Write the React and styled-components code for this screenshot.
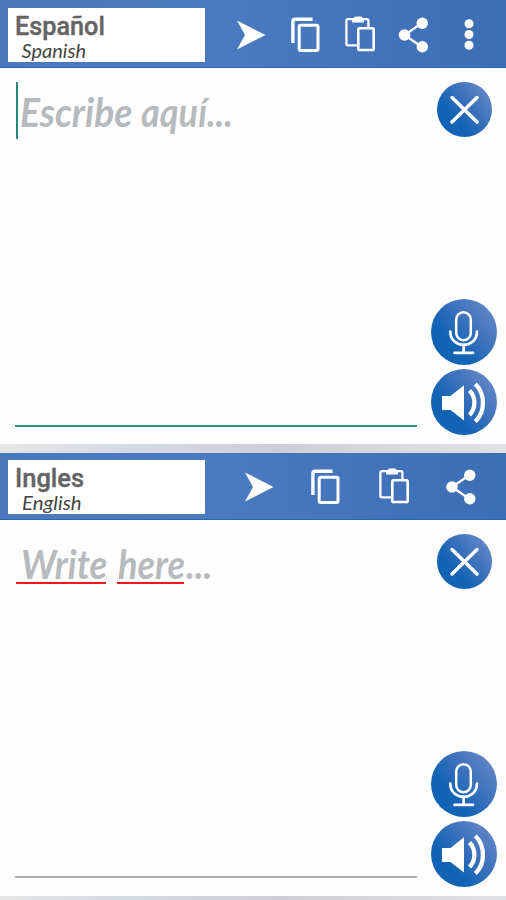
import styled, { createGlobalStyle, css } from 'styled-components'

const GlobalStyle = createGlobalStyle`
  * {
    box-sizing: border-box;
  }
  body {
    margin: 0;
    background: #fefefe;
    font-family: Roboto, "Liberation Sans", sans-serif;
  }
`;

const Screen = styled.div`
  width: 506px;
  height: 900px;
  display: flex;
  flex-direction: column;
  overflow: hidden;
`;

const Panel = styled.section`
  flex: none;
`;

const Header = styled.header`
  height: ${(props) => props.$height}px;
  display: flex;
  align-items: flex-start;
  padding: ${(props) => props.$height - 60.5}px 0 0 7.5px;
  background: linear-gradient(90deg, #4b78bd 0%, #4a7abf 45%, #3c6eb6 100%);
  border-bottom: 1px solid #2d68b2;
`;

const Language = styled.div`
  width: 197px;
  height: 54px;
  padding: 6px 0 0 7px;
  background: #fff;
  overflow: hidden;
`;

const LanguageName = styled.div`
  font-size: 25px;
  line-height: 26px;
  font-weight: 500;
  color: #646464;
  white-space: nowrap;
  -webkit-text-stroke: 0.4px #646464;
  transform: scaleX(${(props) => props.$scale});
  transform-origin: left;
`;

const LanguageAlias = styled.div`
  width: max-content;
  margin-left: 7px;
  font-family: Lato, "Liberation Sans", sans-serif;
  font-size: 20px;
  line-height: 20px;
  font-style: italic;
  color: #454545;
  transform: scaleX(${(props) => props.$scale});
  transform-origin: left;
`;

const Actions = styled.nav`
  display: flex;
  justify-content: space-between;
  width: ${(props) => (props.$menu ? 248 : 232)}px;
  margin: 9.5px 0 0 ${(props) => (props.$menu ? 31.5 : 39.5)}px;
`;

const Icon = styled.svg`
  display: block;
  width: 30px;
  height: 36px;
  overflow: visible;
  fill: none;
  stroke: #fff;
`;

const Body = styled.div`
  height: 376px;
  display: flex;
  justify-content: space-between;
  padding: 13.5px 9px 9px 15px;
`;

const Field = styled.div`
  width: 402px;
  height: ${(props) => (props.$active ? 345.5 : 344.5)}px;
  border-bottom: ${(props) => (props.$active ? '2.5px solid #2f9484' : '2px solid #adadad')};
`;

const Placeholder = styled.div`
  display: flex;
  height: 57px;
  padding-left: 1px;
  font-family: Lato, "Liberation Sans", sans-serif;
  font-size: 41px;
  line-height: 60px;
  font-weight: 700;
  font-style: italic;
  color: #b7babc;
  ${(props) => props.$active && css`
    border-left: 2.5px solid #218b7b;
    margin-left: 1px;
  `}
`;

const Word = styled.span`
  position: relative;
  width: ${(props) => props.$width}px;
  margin-right: ${(props) => props.$gap || 0}px;
  padding-left: ${(props) => props.$indent || 0}px;
  white-space: pre;
  ${(props) => props.$misspelled && css`
    &::after {
      content: '';
      position: absolute;
      left: 0;
      top: 48px;
      width: 100%;
      height: 2px;
      background: #f5161c;
    }
  `}
`;

const Stretch = styled.span`
  display: inline-block;
  transform: scaleX(${(props) => props.$scale});
  transform-origin: left;
`;

const Buttons = styled.div`
  width: 66px;
  display: flex;
  flex-direction: column;
  align-items: center;
  gap: 4.5px;
`;

const RoundButton = styled.button`
  flex: none;
  display: flex;
  align-items: center;
  justify-content: center;
  width: ${(props) => props.$size}px;
  height: ${(props) => props.$size}px;
  margin: 0 0 ${(props) => (props.$top ? 'auto' : 0)};
  padding: 0;
  border: 0;
  border-radius: 50%;
  background: linear-gradient(50deg, #0f62b4 10%, #1564b5 35%, #3d72bc 60%, #5d84c6 85%);
`;

const ButtonIcon = styled.svg`
  display: block;
  width: 100%;
  height: 100%;
  fill: none;
  stroke: #fff;
`;

const Divider = styled.div`
  height: ${(props) => props.$height}px;
  background: linear-gradient(90deg, #e6e6e6, #d5dae1 25%, #cfced4 55%, #e1e2e5 100%);
`;

const SendIcon = () => (
  <Icon viewBox="0 0 30 36">
    <path d="M1 3.5 29.5 18 1 32.5 9 18Z" fill="#fff" stroke="none" />
  </Icon>
)

const CopyIcon = () => (
  <Icon viewBox="0 0 30 36">
    <path d="M1.9 26V4.5Q1.9 2.2 4.2 2.2H21.5" strokeWidth="3.4" />
    <rect x="8.2" y="8.2" width="18.8" height="25.2" rx="1.5" strokeWidth="3" />
  </Icon>
)

const PasteIcon = () => (
  <Icon viewBox="0 0 30 36">
    <path d="M12.5 28.3H3Q1.4 28.3 1.4 26.7V3.8Q1.4 2.2 3 2.2H21.8Q23.4 2.2 23.4 3.8V10" strokeWidth="2.3" />
    <path d="M7 1.5H8.5Q9 -.5 11 -.5H15.5Q17.5 -.5 18 1.5H19V5.5H7Z" fill="#fff" stroke="none" />
    <rect x="13.3" y="11.2" width="15.4" height="21.8" rx="1.3" strokeWidth="2.6" />
  </Icon>
)

const ShareIcon = ({ shift }) => (
  <Icon viewBox="0 0 30 36">
    <g transform={`translate(${shift} 0)`}>
      <path d="M23.5 6 6 18 23.5 30" strokeWidth="2.2" />
      <g fill="#fff" stroke="none">
        <circle cx="23.8" cy="6.2" r="5.7" />
        <circle cx="6" cy="18" r="5.8" />
        <circle cx="23.8" cy="29.8" r="5.7" />
      </g>
    </g>
  </Icon>
)

const MenuIcon = () => (
  <Icon viewBox="0 0 30 36">
    <g fill="#fff" stroke="none">
      <circle cx="15" cy="6.8" r="4.5" />
      <circle cx="15" cy="17.5" r="4.5" />
      <circle cx="15" cy="28.2" r="4.5" />
    </g>
  </Icon>
)

const CloseButton = () => (
  <RoundButton $size={55} $top aria-label="Borrar">
    <ButtonIcon viewBox="0 0 55 55">
      <path d="M15 15.5 40 40M40 15.5 15 40" strokeWidth="3.5" strokeLinecap="round" />
    </ButtonIcon>
  </RoundButton>
)

const MicButton = () => (
  <RoundButton $size={66} aria-label="Hablar">
    <ButtonIcon viewBox="0 0 66 66">
      <rect x="25.2" y="13.2" width="14.6" height="28" rx="7.3" strokeWidth="2.5" />
      <path d="M19.3 32.5C19.3 50.2 46 50.2 46 32.5M32.6 45.5V53.5M23.5 53.8H42" strokeWidth="2.7" strokeLinecap="round" />
    </ButtonIcon>
  </RoundButton>
)

const SpeakerButton = () => (
  <RoundButton $size={66} aria-label="Escuchar">
    <ButtonIcon viewBox="0 0 66 66">
      <path d="M11 27H19.5L33 16.3V51.5L19.5 41H11Z" fill="#fff" stroke="none" />
      <path d="M38.5 21.5C45 28 45 39.5 38.5 46" strokeWidth="4.3" />
      <path d="M44.3 15C54.5 24.5 54.5 43 44.3 52.5" strokeWidth="4.3" />
    </ButtonIcon>
  </RoundButton>
)

const TranslatorPanel = ({ name, nameScale, alias, aliasScale, headerHeight, active, children }) => {
  return <Panel>
    <Header $height={headerHeight}>
      <Language>
        <LanguageName $scale={nameScale}>{name}</LanguageName>
        <LanguageAlias $scale={aliasScale}>{alias}</LanguageAlias>
      </Language>
      <Actions $menu={active}>
        <SendIcon />
        <CopyIcon />
        <PasteIcon />
        <ShareIcon shift={active ? -1.5 : 0} />
        {active && <MenuIcon />}
      </Actions>
    </Header>
    <Body>
      <Field $active={active}>
        <Placeholder $active={active}>{children}</Placeholder>
      </Field>
      <Buttons>
        <CloseButton />
        <MicButton />
        <SpeakerButton />
      </Buttons>
    </Body>
  </Panel>
}

const App = () => {
  return <>
    <GlobalStyle />
    <Screen>
      <TranslatorPanel name="Español" nameScale={1.01} alias="Spanish" aliasScale={1} headerHeight={68} active>
        <Word $width={122} $indent={1}><Stretch $scale={0.91}>Escribe</Stretch></Word>
        <Word $width={92}><Stretch $scale={0.88}>aquí...</Stretch></Word>
      </TranslatorPanel>
      <Divider $height={9} />
      <TranslatorPanel name="Ingles" nameScale={1.02} alias="English" aliasScale={1.02} headerHeight={67}>
        <Word $width={90} $gap={11} $indent={5} $misspelled><Stretch $scale={0.89}>Write</Stretch></Word>
        <Word $width={67} $indent={1} $misspelled><Stretch $scale={0.88}>here</Stretch></Word>
        <Word $width={32} $indent={2}><Stretch $scale={0.9}>...</Stretch></Word>
      </TranslatorPanel>
      <Divider $height={4} />
    </Screen>
  </>
}

export default App
